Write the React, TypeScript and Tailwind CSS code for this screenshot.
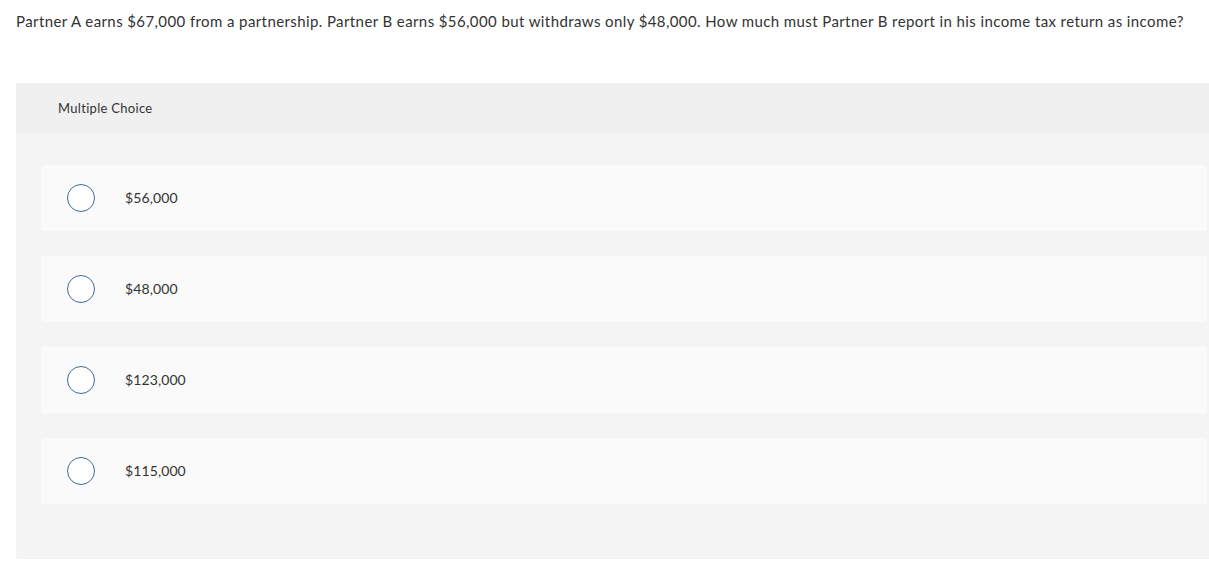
const options = ['$56,000', '$48,000', '$123,000', '$115,000']

export default function App() {
  return (
    <div className="min-h-[565px] bg-white pt-[11px] font-['Lato','Open_Sans',sans-serif] text-[#333]">
      <p className="ml-4 text-[15px] leading-[20px] tracking-[0.4px]">
        Partner A earns $67,000 from a partnership. Partner B earns $56,000 but withdraws only $48,000. How much must
        Partner B report in his income tax return as income?
      </p>

      <div className="ml-4 mt-[52px] rounded-bl-[3px] bg-[#f4f4f4]">
        {/* header */}
        <div className="flex h-[50px] items-center bg-[#f0f0f0] pl-[42px] pt-[2px] text-[13px] tracking-[0.3px]">
          Multiple Choice
        </div>

        {/* answers */}
        <div className="flex flex-col gap-[25px] pb-[55px] pl-[25px] pr-[2px] pt-[32px]">
          {options.map((opt) => (
            <label key={opt} className="flex h-[66px] cursor-pointer items-center rounded-[3px] bg-[#fafafa]">
              <span className="ml-[26px] h-[28px] w-[28px] rounded-full border-[1.5px] border-[#3d6a9c] bg-white" />
              <span className="ml-[30px] pb-[2px] text-[14px] tracking-[0.1px]">{opt}</span>
            </label>
          ))}
        </div>
      </div>
    </div>
  )
}
